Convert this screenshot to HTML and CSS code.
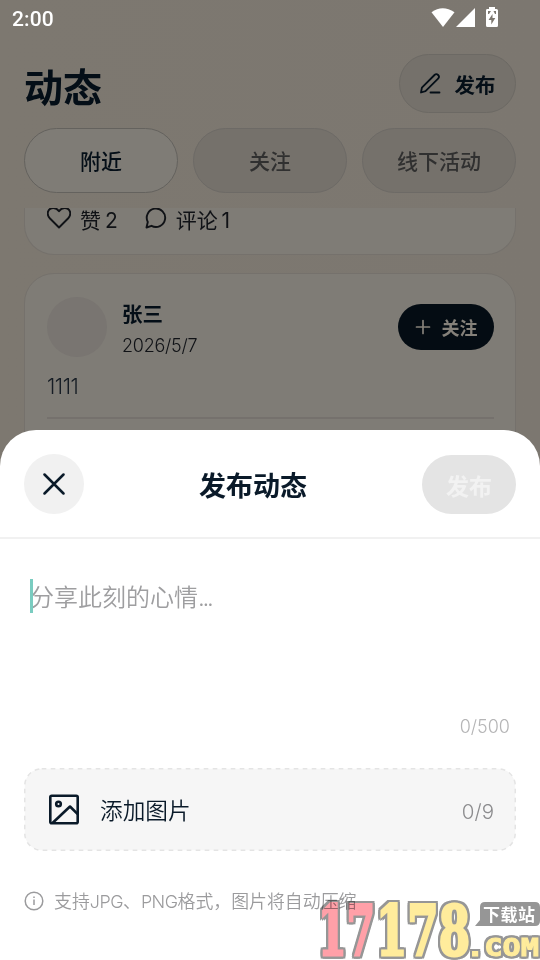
FILE: index.html
```html
<!DOCTYPE html>
<html lang="zh-CN">
<head>
<meta charset="utf-8">
<title>动态</title>
<link rel="stylesheet" href="styles.css">
</head>
<body>
<div class="screen">
  <header class="status">
    <span class="clock">2:00</span>
    <svg class="status-icons" width="68" height="22" viewBox="0 0 68 22" fill="#fff">
      <path d="M0.500 5.200Q11.500-2.800 23.500 5.200L12 20Z"/>
      <path d="M44 1V20H25Z"/>
      <path d="M55 2h3V0h6v2h1.500q1.500 0 1.500 1.500v15q0 1.500-1.500 1.500h-9q-1.500 0-1.500-1.500v-15q0-1.500 1-1.500z"/>
      <path fill="#7d776f" d="M61.500 7 57.500 13h2.800v4.500l4-6.500h-2.800zM57 4h3l-2 3h-1zM62.500 4h2.500v3h-1z"/>
    </svg>
  </header>
  <div class="topbar">
    <h1>动态</h1>
    <button class="compose">
      <svg width="24" height="24" viewBox="0 0 24 24" fill="none" stroke="#040e17" stroke-width="1.8" stroke-linejoin="round" stroke-linecap="round"><path d="M3 20.500l.9-4.900L16.500 3a2.400 2.400 0 0 1 3.600 3.600L7.500 19.200z"/><path d="M12.500 20.500h9"/></svg>
      <span>发布</span>
    </button>
  </div>
  <nav class="tabs">
    <button class="tab active">附近</button>
    <button class="tab">关注</button>
    <button class="tab">线下活动</button>
  </nav>
  <main class="feed">
    <article class="card first">
      <div class="action">
        <svg width="24" height="22" viewBox="0 0 24 22" fill="none" stroke="#101216" stroke-width="1.900" stroke-linejoin="round"><path d="M12 20.500 3 11.500C-1.600 6.500 1.500 1 6.300 1 9 1 10.700 2.300 12 4.300 13.300 2.300 15 1 17.700 1c4.800 0 7.900 5.500 3.300 10.500z"/></svg>
        <span>赞 2</span>
      </div>
      <div class="action comment">
        <svg width="22" height="22" viewBox="0 0 22 22" fill="none" stroke="#101216" stroke-width="1.900" stroke-linejoin="round"><path d="M1.500 20.500 2.800 15A9.200 9.200 0 1 1 6.500 18.800z"/></svg>
        <span>评论 1</span>
      </div>
    </article>
    <article class="card">
      <div class="author">
        <div class="avatar"></div>
        <div class="who"><strong>张三</strong><time>2026/5/7</time></div>
        <button class="follow">
          <svg width="16" height="16" viewBox="0 0 16 16" stroke="#85817a" stroke-width="1.700" stroke-linecap="round"><path d="M8 1.500v13M1.500 8h13"/></svg>
          <span>关注</span>
        </button>
      </div>
      <p class="post">1111</p>
      <div class="rule"></div>
    </article>
  </main>
  <section class="sheet">
    <div class="sheet-head">
      <button class="close"><svg width="22" height="22" viewBox="0 0 22 22" stroke="#0a1a29" stroke-width="2.500" stroke-linecap="round"><path d="M1.500 1.500l19 19M20.500 1.500l-19 19"/></svg></button>
      <h2>发布动态</h2>
      <button class="submit">发布</button>
    </div>
    <div class="editor">
      <div class="placeholder"><i class="caret"></i>分享此刻的心情<span class="dots">...</span></div>
      <div class="count">0/500</div>
    </div>
    <div class="picker">
      <svg class="dash" width="492" height="83"><rect x="0.750" y="0.750" width="490.500" height="81.500" rx="17" fill="#f6f6f6" stroke="#e4e4e4" stroke-width="1.500" stroke-dasharray="4.600 4.400"/></svg>
      <div class="picker-row">
        <svg width="30" height="31" viewBox="0 0 30 31" fill="none" stroke="#0a1a29" stroke-width="2.600" stroke-linejoin="round"><rect x="1.300" y="1.700" width="27.400" height="27.600" rx="1.500"/><circle cx="9.500" cy="10" r="2.300"/><path d="M3.500 29 21 12.500l7.700 7.700"/></svg>
        <span class="add">添加图片</span>
        <span class="quota">0/9</span>
      </div>
    </div>
    <div class="hint">
      <svg width="20" height="20" viewBox="0 0 20 20" fill="none" stroke="#9b9b9d" stroke-width="1.500"><circle cx="10" cy="10" r="8.800"/><path d="M10 8.500v5.500M10 5.500v1.500"/></svg>
      <span>支持<span class="latin">JPG</span>、<span class="latin">PNG</span>格式，图片将自动压缩</span>
    </div>
  </section>
  <svg class="mark" width="226" height="62" viewBox="314 898 226 62">
    <g class="digits">
      <text class="red" x="318" y="955" textLength="57" lengthAdjust="spacingAndGlyphs">17</text>
      <text class="yellow" x="376" y="955" textLength="94" lengthAdjust="spacingAndGlyphs">178</text>
    </g>
    <path d="M475 926 480 920V907q0-5 5-5H535q5 0 5 5v14q0 5-5 5z" fill="#969696"/>
    <text class="site" x="483" y="921" textLength="52">下载站</text>
    <text class="com" x="466" y="956" textLength="73" lengthAdjust="spacingAndGlyphs">.COM</text>
  </svg>
</div>
</body>
</html>
```
FILE: styles.css
```css
* { box-sizing: border-box; }
body {
  margin: 0;
  font-family: Inter, "Noto Sans CJK SC", sans-serif;
  color: #040e17;
}
h1, h2, p { margin: 0; }
button {
  margin: 0;
  padding: 0;
  border: 0;
  font: inherit;
  color: inherit;
  display: flex;
  align-items: center;
  justify-content: center;
}
svg { display: block; flex: none; }
.screen {
  position: relative;
  width: 540px;
  height: 960px;
  overflow: hidden;
  background: linear-gradient(90deg, #7d7870, #7c7770);
  display: flex;
  flex-direction: column;
}
.status {
  height: 54px;
  flex: none;
  display: flex;
  justify-content: space-between;
  padding: 7px 41px 0 12px;
}
.clock {
  font: 500 21px/24px Roboto, sans-serif;
  color: #fff;
  letter-spacing: 0.1px;
}
.topbar {
  height: 59px;
  flex: none;
  padding: 0 24px;
  display: flex;
  justify-content: space-between;
}
h1 { font-size: 39px; line-height: 67px; font-weight: 700; }
.compose {
  width: 117px;
  height: 59px;
  border: 1.5px solid #6c6964;
  border-radius: 30px;
  background: #75716b;
  font-size: 20.5px;
  font-weight: 700;
  gap: 13px;
  padding-right: 2px;
}
.tabs {
  height: 65px;
  margin: 15px 24px 0;
  flex: none;
  display: grid;
  grid-template-columns: repeat(3, 1fr);
  gap: 15px;
}
.tab {
  border: 1.5px solid #6d6a66;
  border-radius: 33px;
  background: #75716b;
  color: #303030;
  font-size: 21px;
  font-weight: 500;
  padding-bottom: 1px;
}
.tab.active { background: #7f7c76; border-color: #64625e; color: #040e17; }
.feed {
  margin-top: 15px;
  height: 300px;
  flex: none;
  padding: 0 24px;
  overflow: hidden;
}
.card {
  height: 240px;
  border: 1.5px solid #75716c;
  border-radius: 30px;
  background: #7f7c76;
  padding: 23px 21px 0 22px;
}
.card.first {
  height: 47px;
  border-top: 0;
  border-radius: 0 0 30px 30px;
  margin-bottom: 18px;
  padding: 0 22px;
  display: flex;
}
.action {
  display: flex;
  gap: 9px;
  font-size: 21px;
  line-height: 26px;
  color: #101216;
  word-spacing: -2px;
}
.action svg { margin-top: -1px; }
.comment { margin-left: 27px; }
.author { display: flex; height: 60px; align-items: center; }
.avatar { width: 60px; height: 60px; border-radius: 50%; background: #797571; }
.who { margin-left: 15px; flex: 1; display: flex; flex-direction: column; }
.who strong { font-size: 20.5px; line-height: 32px; margin-top: 5px; }
.who time {
  font-size: 18px;
  line-height: 30px;
  font-weight: 300;
  color: #101216;
  letter-spacing: -0.25px;
}
.follow {
  width: 96px;
  height: 46px;
  border-radius: 23px;
  background: #040c13;
  color: #85817a;
  font-size: 18px;
  font-weight: 700;
  gap: 11px;
}
.post { margin-top: 14px; font-size: 21px; line-height: 32px; font-weight: 300; color: #151c24; letter-spacing: -0.4px; }
.rule { height: 2px; margin-top: 14px; background: #75716d; }
.sheet {
  position: absolute;
  left: 0;
  right: 0;
  top: 430px;
  bottom: 0;
  background: #fff;
  border-radius: 36px 36px 0 0;
  color: #0a1a29;
}
.sheet-head {
  height: 109px;
  border-bottom: 2px solid #f1f1f1;
  padding: 1px 24px 0;
  display: grid;
  grid-template-columns: 60px 1fr 94px;
  align-items: center;
}
.close { width: 60px; height: 60px; border-radius: 50%; background: #f1f1f1; }
h2 { font-size: 27px; line-height: 40px; padding-top: 6px; text-align: center; font-weight: 700; }
.submit {
  height: 59px;
  border-radius: 30px;
  background: #e4e4e4;
  color: #f2f2f2;
  font-size: 23px;
  font-weight: 700;
  padding-top: 1px;
}
.editor {
  height: 229px;
  padding: 40px 30px 0;
  display: flex;
  flex-direction: column;
}
.placeholder {
  position: relative;
  height: 34px;
  font-size: 24px;
  line-height: 38px;
  font-weight: 350;
  color: #9e9ea0;
}
.caret { position: absolute; left: 0; top: 0; width: 3px; height: 34px; background: #7accc0; }
.dots { letter-spacing: -2.3px; }
.count {
  margin-top: 101px;
  text-align: right;
  font-size: 18px;
  line-height: 26px;
  font-weight: 300;
  color: #b5b5b6;
}
.picker { position: relative; height: 83px; margin: 0 24px; }
.dash { position: absolute; inset: 0; }
.picker-row {
  position: relative;
  height: 83px;
  padding: 0 22px 0 25px;
  display: flex;
  align-items: center;
}
.add { margin-left: 21px; flex: 1; font-size: 22.7px; font-weight: 350; }
.quota { font-size: 20.5px; font-weight: 300; color: #8c8c8e; padding-top: 3px; }
.hint {
  margin: 37px 24px 0;
  display: flex;
  align-items: center;
  gap: 10px;
  font-size: 17.9px;
  line-height: 28px;
  font-weight: 350;
  color: #9b9b9d;
}
.hint svg { margin-top: -2px; }
.latin { font-weight: 300; letter-spacing: -0.5px; }
.mark { position: absolute; left: 314px; top: 898px; mix-blend-mode: multiply; }
.digits {
  font: 700 69px "DejaVu Serif", serif;
  stroke-width: 3px;
}
.digits, .com {
  filter: drop-shadow(2px 0 0 #969696) drop-shadow(-2px 0 0 #969696) drop-shadow(0 2px 0 #969696) drop-shadow(0 -2px 0 #969696);
}
.red { fill: #ffa0a8; stroke: #ffa0a8; }
.yellow { fill: #ffec9c; stroke: #ffec9c; }
.site { font: 700 17px "Noto Sans CJK SC", sans-serif; fill: #fff; }
.com {
  font: 700 25px "DejaVu Sans Mono", monospace;
  fill: #ffec9c;
  stroke: #ffec9c;
  stroke-width: 1px;
}
```
